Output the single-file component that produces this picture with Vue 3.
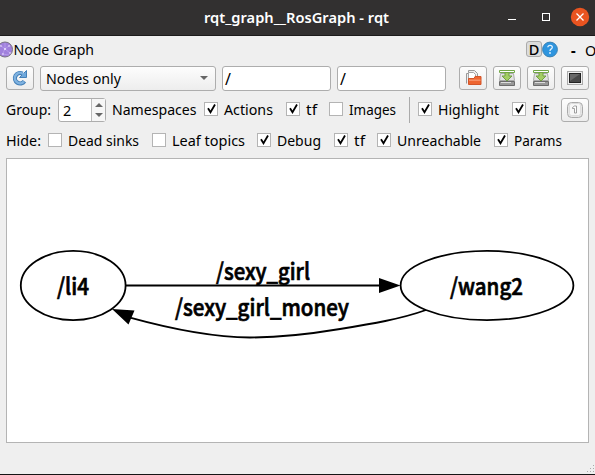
<script setup>
const topChecks = [
  { label: 'Actions', checked: true, width: 82, text: 49 },
  { label: 'tf', checked: true, width: 43, text: 11 },
  { label: 'Images', checked: false, width: 80, text: 47 },
]
const viewChecks = [
  { label: 'Highlight', checked: true, width: 94, text: 61 },
  { label: 'Fit', checked: true, width: 49, text: 17 },
]
const hideChecks = [
  { label: 'Dead sinks', checked: false, width: 104, text: 71 },
  { label: 'Leaf topics', checked: false, width: 105, text: 73 },
  { label: 'Debug', checked: true, width: 77, text: 44 },
  { label: 'tf', checked: true, width: 43, text: 11 },
  { label: 'Unreachable', checked: true, width: 117, text: 84 },
  { label: 'Params', checked: true, width: 80, text: 48 },
]
</script>

<template>
  <div class="window">
    <header class="titlebar">
      <svg class="caption" width="186" height="24"><text x="0" y="17" textLength="185" lengthAdjust="spacingAndGlyphs">rqt_graph__RosGraph - rqt</text></svg>
      <svg class="controls" width="90" height="35" viewBox="0 0 90 35">
        <path d="M3 19.5h8" stroke="#fff" />
        <rect x="37.5" y="13.5" width="7" height="7" fill="none" stroke="#fff" />
        <circle cx="75" cy="17" r="9.2" fill="#e95420" />
        <path d="m71.5 13.5 7 7m0-7-7 7" stroke="#fff" stroke-width="1.3" />
      </svg>
    </header>

    <div class="dock">
      <svg width="13" height="17" viewBox="0 0 13 17">
        <circle cx="5" cy="8.5" r="7.5" fill="#a080dc" stroke="#77717f" />
        <path d="m0 4 5 4 5-4M5 8l-3 6m3-6 5 4M5 8V2M2 13l7 1" stroke="#b99fec" fill="none" stroke-width=".8" />
        <g fill="#eee6ff"><circle cx="5" cy="8" r="1" /><circle cx="1" cy="5" r=".8" /><circle cx="9" cy="5" r=".8" /><circle cx="3" cy="13" r=".8" /><circle cx="10" cy="12" r=".8" /></g>
      </svg>
      <svg class="label" width="82" height="20"><text x="0.5" y="16" textLength="80.5" lengthAdjust="spacingAndGlyphs">Node Graph</text></svg>
      <span class="spacer"></span>
      <span class="dbutton">D</span>
      <svg width="16" height="17" viewBox="0 0 16 17">
        <circle cx="8" cy="8.5" r="7.4" fill="#2e95df" stroke="#3a82b4" />
        <path d="M5.8 6.3q.2-2 2.3-2 2.2 0 2.2 1.9 0 1.1-1.3 1.9-1 .6-1 1.8" fill="none" stroke="#e4f3ff" stroke-width="1.3" />
        <circle cx="8" cy="12" r=".9" fill="#e4f3ff" />
      </svg>
      <span class="dash">-</span>
      <span class="oh">O</span>
    </div>

    <div class="row">
      <button class="tool">
        <svg width="18" height="18" viewBox="0 0 18 18">
          <path d="M13.4 12.2A5.2 5.2 0 1 1 11.5 4.600" fill="none" stroke="#4580b8" stroke-width="4.200" />
          <path d="M15.500 1.500v7H8.500z" fill="#6ea8dc" stroke="#4580b8" />
          <path d="M12.900 12.600A5.200 5.200 0 1 1 12.500 5.200" fill="none" stroke="#7fb2e0" stroke-width="2.400" />
        </svg>
      </button>
      <div class="combo">
        <svg class="label" width="78" height="22"><text x="0" y="17" textLength="75" lengthAdjust="spacingAndGlyphs">Nodes only</text></svg>
        <span class="spacer"></span>
        <svg width="8" height="4"><path d="M0 0h8L4 4z" fill="#666" /></svg>
      </div>
      <div class="input">/</div>
      <div class="input">/</div>
      <div class="tools">
        <button class="tool">
          <svg width="18" height="18" viewBox="0 0 18 18">
            <path d="M2.500 14.500v-10h2v-3h6l3 3v5" fill="#eee" stroke="#999" />
            <path d="M4.500 3.500h5l2 2v5h-7z" fill="#fff" stroke="#a5a5a5" />
            <path d="M4.500 15.500V9.500h5.500l1-2h6v8z" fill="#ee6530" stroke="#d35529" />
            <path d="M5 10.500h11.500v1.500H5z" fill="#f79066" />
          </svg>
        </button>
        <button v-for="n in 2" :key="n" class="tool">
          <svg width="18" height="18" viewBox="0 0 18 18">
            <path d="M2.500 4.500h13l1 7h-15z" fill="#e2e2e2" stroke="#aaa" />
            <path d="M1.500 12.500h15v4h-15z" fill="#999" stroke="#6b6b6b" />
            <path d="M3 13.500h10" stroke="#ddd" />
            <path d="M1.500 1.500h15v2h-15z" fill="#fff" stroke="#72a847" />
            <path d="M7 3.500h4V7h3l-5 5-5-5h3z" fill="#a3cd63" stroke="#72a042" />
          </svg>
        </button>
        <button class="tool">
          <svg width="18" height="18" viewBox="0 0 18 18">
            <rect x="1.500" y="2.500" width="15" height="13" fill="#eee" stroke="#aaa" />
            <rect x="3.500" y="4.500" width="11" height="9" fill="#484848" stroke="#222" />
            <path d="M4 5h10L4 12z" fill="#686868" />
          </svg>
        </button>
      </div>
    </div>

    <div class="row">
      <svg class="label group" width="52" height="24"><text x="0" y="17" textLength="45" lengthAdjust="spacingAndGlyphs">Group:</text></svg>
      <div class="spin">
        <span class="value">2</span>
        <span class="arrows">
          <svg width="8" height="14"><path d="M0 4h8L4 0zM0 10h8l-4 4z" fill="#666" /></svg>
        </span>
      </div>
      <svg class="label names" width="92" height="24"><text x="0" y="17" textLength="84.500" lengthAdjust="spacingAndGlyphs">Namespaces</text></svg>
      <label v-for="c in topChecks" :key="c.label" class="check" :style="{ width: c.width + 'px' }">
        <i class="box"><svg v-if="c.checked" width="12" height="12"><path d="m3 5.200 2.500 4L10 1.500" /></svg></i>
        <svg class="label" :width="c.text + 2" height="24"><text x="0" y="17" :textLength="c.text" lengthAdjust="spacingAndGlyphs">{{ c.label }}</text></svg>
      </label>
      <span class="separator"></span>
      <label v-for="c in viewChecks" :key="c.label" class="check" :style="{ width: c.width + 'px' }">
        <i class="box"><svg v-if="c.checked" width="12" height="12"><path d="m3 5.200 2.500 4L10 1.500" /></svg></i>
        <svg class="label" :width="c.text + 2" height="24"><text x="0" y="17" :textLength="c.text" lengthAdjust="spacingAndGlyphs">{{ c.label }}</text></svg>
      </label>
      <button class="tool">
        <svg width="18" height="18" viewBox="0 0 18 18">
          <rect x="1.500" y="1.500" width="15" height="15" rx="4" fill="#e6e6e6" stroke="#aaa" />
          <rect x="3.500" y="2.500" width="11" height="12" rx="2" fill="#f7f7f7" stroke="#ddd" />
          <path d="M6.500 6.500 8.500 5h2v7h-2V7.500h-2z" fill="#fff" stroke="#888" stroke-width=".8" />
        </svg>
      </button>
    </div>

    <div class="row hide">
      <svg class="label" width="42" height="24"><text x="0" y="17" textLength="35" lengthAdjust="spacingAndGlyphs">Hide:</text></svg>
      <label v-for="c in hideChecks" :key="c.label" class="check" :style="{ width: c.width + 'px' }">
        <i class="box"><svg v-if="c.checked" width="12" height="12"><path d="m3 5.200 2.500 4L10 1.500" /></svg></i>
        <svg class="label" :width="c.text + 2" height="24"><text x="0" y="17" :textLength="c.text" lengthAdjust="spacingAndGlyphs">{{ c.label }}</text></svg>
      </label>
    </div>

    <main class="canvas">
      <svg width="581" height="283" viewBox="7 159 581 283">
        <g fill="none" stroke="#000" stroke-width="1.8">
          <ellipse cx="73.2" cy="285.5" rx="52.4" ry="34.6" />
          <ellipse cx="487" cy="285.5" rx="86.4" ry="34.6" />
          <path d="M126 285.5H380" />
          <path d="M426 310C401 319 371 324 340 329C310 334 282 337.500 250 337.500C210 337 168 328 131 317.800" />
        </g>
        <path d="M379 278v15l21.500-7.500zM112 309l22.500 1.500-6 14z" />
        <g class="names-on-graph">
          <text x="57" y="295" textLength="32" lengthAdjust="spacingAndGlyphs">/li4</text>
          <text x="450" y="295" textLength="73" lengthAdjust="spacingAndGlyphs">/wang2</text>
          <text x="216" y="280" textLength="94" lengthAdjust="spacingAndGlyphs">/sexy_girl</text>
          <text x="175" y="315.500" textLength="174" lengthAdjust="spacingAndGlyphs">/sexy_girl_money</text>
        </g>
      </svg>
    </main>

    <footer class="status">
      <svg width="9" height="9"><path d="M7 0h1v1H7zM4 3h1v1H4zM7 3h1v1H7zM1 6h1v1H1zM4 6h1v1H4zM7 6h1v1H7z" fill="#aaa" /></svg>
    </footer>
  </div>
</template>

<style>
body { background: #efefef; overflow: hidden; }
</style>

<style scoped>
.window { width: 595px; height: 475px; box-sizing: border-box; display: flex; flex-direction: column; overflow: hidden; background: #efefef; border-bottom: 1px solid #151515; font: 14.5px "Noto Sans", sans-serif; color: #000; }
svg { display: block; flex: none; }
.label { overflow: visible; }
.spacer { flex: 1; }
.titlebar { height: 36px; box-sizing: border-box; flex: none; display: flex; justify-content: space-between; align-items: center; background: #323030; border-bottom: 1px solid #1c1b1b; padding-left: 204px; }
.caption { fill: #fff; font-weight: 600; font-size: 14.5px; overflow: visible; }
.dock { height: 26px; flex: none; display: flex; align-items: center; }
.dbutton { width: 16px; height: 16px; box-sizing: border-box; border: 1px solid #aaa; border-radius: 3px; background: #dcdcdc; line-height: 15px; text-align: center; font-weight: 500; }
.dash { width: 14px; margin-left: 13px; padding-top: 2px; font-weight: 800; }
.oh { width: 10px; padding-top: 2px; }
.row { height: 24px; flex: none; display: flex; align-items: center; padding: 0 6px; margin-top: 4px; }
.row + .row { margin-top: 8px; }
.tool { width: 28px; height: 24px; box-sizing: border-box; flex: none; display: flex; align-items: center; justify-content: center; padding: 0; border: 1px solid #adadad; border-radius: 3px; background: linear-gradient(#fdfdfd, #ededed); }
.combo { width: 176px; height: 25px; box-sizing: border-box; margin: 0 6px; padding: 0 7px 0 5px; display: flex; align-items: center; border: 1px solid #adadad; border-radius: 3px; background: linear-gradient(#fdfdfd, #ededed); }
.input { width: 109px; height: 25px; box-sizing: border-box; margin-right: 6px; padding-left: 2px; border: 1px solid #adadad; border-radius: 3px; background: #fff; line-height: 24px; font-size: 16px; }
.tools { display: flex; gap: 6px; margin-left: 7px; }
.spin { width: 48px; height: 24px; box-sizing: border-box; display: flex; border: 1px solid #adadad; border-radius: 3px; background: #fff; }
.value { width: 32px; box-sizing: border-box; padding-left: 4px; line-height: 23px; }
.arrows { flex: 1; display: flex; align-items: center; justify-content: center; border-left: 1px solid #bbb; background: #f6f6f6; }
.names { margin-left: 6px; }
.check { height: 24px; flex: none; display: flex; align-items: flex-start; gap: 6px; }
.box { width: 14px; height: 14px; box-sizing: border-box; flex: none; margin-top: 4px; border: 1px solid #b4b4b4; background: #fff; }
.box path { fill: none; stroke: #000; stroke-width: 1.8; }
.separator { width: 1px; height: 26px; margin-right: 8px; background: #aaa; }
.row.hide { margin-top: 7px; }
.canvas { width: 583px; height: 285px; box-sizing: border-box; flex: none; margin: 5px 6px 0; border: 1px solid #b4b4b4; background: #fff; }
.names-on-graph { font: 500 23px "Noto Sans CJK SC", sans-serif; stroke: #000; stroke-width: 0.7px; }
.status { flex: 1; display: flex; justify-content: flex-end; align-items: flex-end; }
</style>
